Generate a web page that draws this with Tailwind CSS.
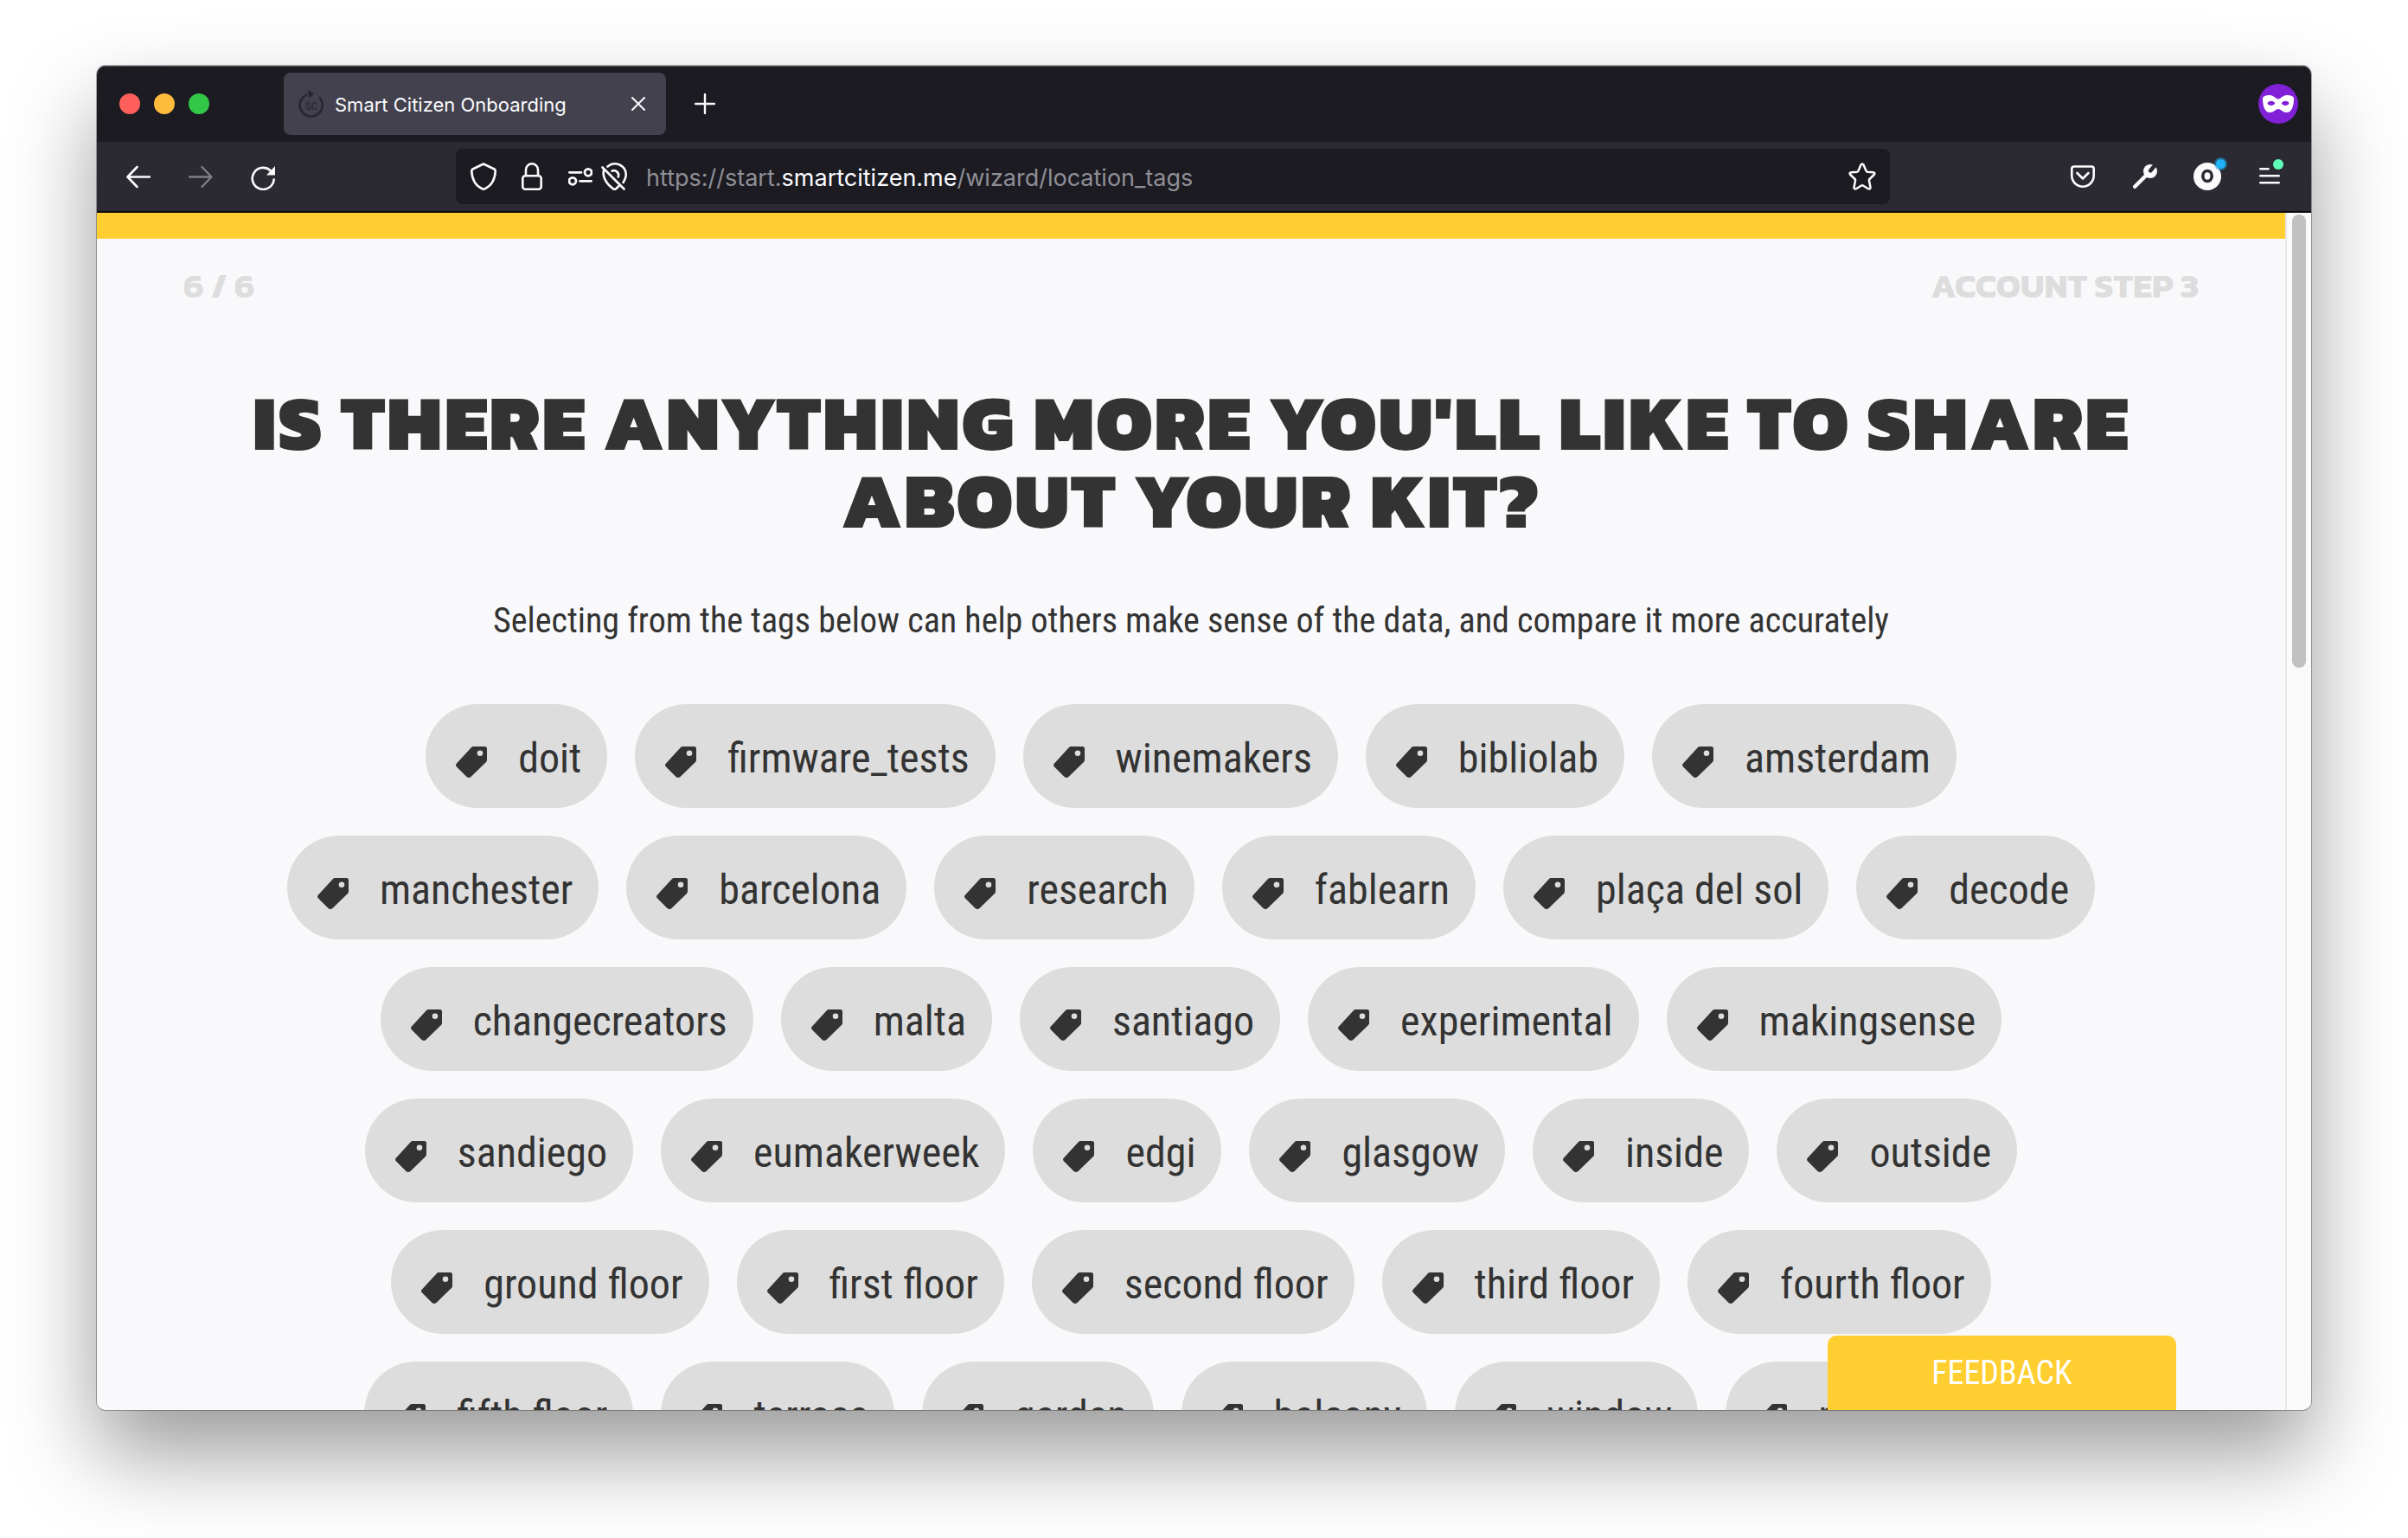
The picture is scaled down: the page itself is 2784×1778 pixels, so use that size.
<!DOCTYPE html>
<html lang="en">
<head>
<meta charset="utf-8">
<meta name="viewport" content="width=device-width, initial-scale=1">
<title>Smart Citizen Onboarding</title>
<script src="https://cdn.jsdelivr.net/npm/@tailwindcss/browser@4"></script>
</head>
<body class="bg-white">
<svg class="hidden" aria-hidden="true">
  <symbol id="tag" viewBox="0 0 36 36">
    <path fill="currentColor" fill-rule="evenodd" d="M20 0H33.500Q36 0 36 2.500V15.500Q36 17 35 18L17.500 35Q15 37 12.500 35L1 23.500Q-1 21.500 1 19.500L18 1Q19 0 20 0ZM28 4.500a3.300 3.300 0 1 0 0 6.600a3.300 3.300 0 0 0 0-6.600Z"/>
  </symbol>
</svg>

<div class="flex h-screen flex-col px-[112px] pt-[76px] pb-[148px]">
  <div class="flex min-h-0 flex-1 flex-col overflow-hidden rounded-[10px] bg-[#f9f9fb] shadow-[0_50px_100px_rgba(0,0,0,0.4),0_0_0_1px_rgba(0,0,0,0.3)]">

    <!-- Tab strip -->
    <header class="flex h-[88px] shrink-0 items-center border-t border-[#55545b] bg-[#1c1b22] pr-[15px] pb-px pl-[26px] font-['Inter',sans-serif] text-[#fbfbfe]">
      <div class="flex gap-4">
        <button aria-label="Close window" class="size-6 rounded-full bg-[#ff5f5b]"></button>
        <button aria-label="Minimize window" class="size-6 rounded-full bg-[#ffbc3c]"></button>
        <button aria-label="Zoom window" class="size-6 rounded-full bg-[#33c748]"></button>
      </div>
      <div class="ml-[86px] flex h-[72px] w-[442px] items-center rounded-lg bg-[#42414d] pr-6 pl-[17px]">
        <svg class="h-8 w-[30px] shrink-0" viewBox="0 0 30 32" fill="none" stroke="#26252b" stroke-width="2.400">
          <path d="M10 5.500A13 13 0 1 0 24 8.500L26 10"/>
          <path d="M10.500 0L18 4.500L12.500 9.500Z" fill="#26252b" stroke="none"/>
          <text x="15" y="22.500" text-anchor="middle" font-family="Roboto Condensed, sans-serif" font-size="13" fill="#26252b" stroke="none">SC</text>
        </svg>
        <span class="ml-3 flex-1 pt-[2px] text-[22px] leading-7">Smart Citizen Onboarding</span>
        <button aria-label="Close tab"><svg class="size-4" viewBox="0 0 16 16" stroke="currentColor" stroke-width="2" stroke-linecap="round"><path d="M1 1L15 15M15 1L1 15"/></svg></button>
      </div>
      <button aria-label="New tab" class="ml-[33px]"><svg class="size-6" viewBox="0 0 24 24" stroke="currentColor" stroke-width="2.400" stroke-linecap="round"><path d="M12 1V23M1 12H23"/></svg></button>
      <svg class="ml-auto size-[46px]" viewBox="0 0 46 46" role="img" aria-label="Private browsing">
        <circle cx="23" cy="23" r="23" fill="#8020d7"/>
        <path fill="#fff" fill-rule="evenodd" d="M5 17C5 14 9 13 13 13C18 13 20 17.500 23 17.500C26 17.500 28 13 33 13C37 13 41 14 41 17C41 25 39 33 32.500 33C28 33 26 29 23 29C20 29 18 33 13.500 33C7 33 5 25 5 17ZM10.400 22.300C11.500 18.800 18 18.800 19.200 22.300C18 25.800 11.500 25.800 10.400 22.300ZM26.800 22.300C28 18.800 34.500 18.800 35.600 22.300C34.500 25.800 28 25.800 26.800 22.300Z"/>
      </svg>
    </header>

    <!-- Navigation toolbar -->
    <nav class="flex h-[82px] shrink-0 items-center border-b-2 border-[#0c0c0d] bg-[#2b2a33] pr-9 pl-[34px] text-[#fbfbfe]">
      <div class="flex items-center gap-11">
        <button aria-label="Back"><svg class="size-7" viewBox="0 0 28 28" fill="none" stroke="currentColor" stroke-width="2.600" stroke-linecap="round" stroke-linejoin="round"><path d="M12.500 3L1.500 14.500L12.500 26M2 14.500H27"/></svg></button>
        <button aria-label="Forward" disabled class="text-[#7f7e85]"><svg class="size-7" viewBox="0 0 28 28" fill="none" stroke="currentColor" stroke-width="2.400" stroke-linecap="round" stroke-linejoin="round"><path d="M15.500 3L26.500 14.500L15.500 26M26 14.500H1"/></svg></button>
        <button aria-label="Reload" class="pt-1"><svg class="size-7" viewBox="0 0 28 28" fill="none" stroke="currentColor" stroke-width="2.600" stroke-linecap="round"><path d="M22.500 5A12.500 12.500 0 1 0 26.700 15.500"/><path d="M28 0V10.500H18Z" fill="currentColor" stroke="none"/></svg></button>
      </div>

      <div class="mx-[209px] flex h-16 flex-1 items-center rounded-lg bg-[#1c1b22] pr-4 pl-[17px]">
        <button aria-label="Tracking protection"><svg class="h-8 w-[30px]" viewBox="0 0 30 32" fill="none" stroke="currentColor" stroke-width="2.600" stroke-linejoin="round"><path d="M15 1.500L27.500 7.500Q28.800 8.200 28.700 10C28.300 19 24.500 26.500 16.500 30.300Q15 31 13.500 30.300C5.500 26.500 1.700 19 1.300 10Q1.200 8.200 2.500 7.500Z"/></svg></button>
        <button aria-label="Connection secure" class="ml-[29px]"><svg class="h-8 w-6" viewBox="0 0 24 32" fill="none" stroke="currentColor" stroke-width="2.600"><rect x="1.300" y="15.300" width="21.400" height="15.400" rx="3"/><path d="M5 15V8.300a7 7 0 0 1 14 0V15"/></svg></button>
        <button aria-label="Site permissions" class="ml-[30px]"><svg class="h-8 w-7" viewBox="0 0 28 32" fill="none" stroke="currentColor" stroke-width="2.800" stroke-linecap="round"><path d="M1.400 11.300H15M13.500 21.300H26.600"/><circle cx="23" cy="11.300" r="4"/><circle cx="5" cy="21.300" r="4"/></svg></button>
        <button aria-label="Location blocked" class="ml-[10px]"><svg class="h-8 w-[30px]" viewBox="0 0 30 32" fill="none" stroke="currentColor" stroke-width="2.600" stroke-linecap="round"><path d="M7.500 4.500C16 -2.500 28.700 3 28.700 14C28.700 17.500 27 20.500 25.500 23"/><path d="M3 9C1.500 15.500 5 21.500 8.500 25.500L13.500 30Q15.500 31.700 17.500 30L20.500 27"/><path d="M12.500 9.700C17 7.800 21.500 12 19.700 16.500"/><path d="M1.500 5.500L26.500 30.500"/></svg></button>
        <div role="textbox" aria-label="Address" contenteditable="true" class="ml-[22px] flex-1 pt-[3px] font-['Inter',sans-serif] text-[27px] leading-8 whitespace-nowrap text-[#8f8f96]">https://start.<span class="text-[#fbfbfe]">smartcitizen.me</span>/wizard/location_tags</div>
        <button aria-label="Bookmark this page"><svg class="size-8" viewBox="0 0 32 32" fill="none" stroke="currentColor" stroke-width="2.500" stroke-linejoin="round"><path d="M14.500 2.500Q16 0.500 17.500 2.500L20.500 9.500Q21 10.500 22 10.700L28.800 11.300Q31.500 11.800 29.700 14L24.500 19Q23.700 19.800 24 21L25.500 28.500Q25.500 31.200 23 30.200L16.900 26.500Q16 26 15.100 26.500L9 30.200Q6.500 31.200 6.500 28.500L8 21Q8.300 19.800 7.500 19L2.300 14Q0.500 11.800 3.200 11.300L10 10.700Q11 10.500 11.500 9.500Z"/></svg></button>
      </div>

      <div class="flex items-center">
        <button aria-label="Save to Pocket"><svg class="h-[26px] w-7" viewBox="0 0 28 26" fill="none" stroke="currentColor" stroke-width="2.600" stroke-linecap="round" stroke-linejoin="round"><path d="M4 1.500H24Q26.700 1.500 26.700 4.200V12A12.700 12.700 0 0 1 1.300 12V4.200Q1.300 1.500 4 1.500Z"/><path d="M7.500 9L14 15.500L20.500 9"/></svg></button>
        <button aria-label="Developer tools" class="ml-11"><svg class="size-7" viewBox="0 0 28 28" fill="none" stroke-linecap="round"><path d="M2.200 25.800L16 12" stroke="currentColor" stroke-width="4.400"/><circle cx="20" cy="8" r="8" fill="currentColor"/><path d="M27 -1L20.300 7.300" stroke="#2b2a33" stroke-width="4.600"/></svg></button>
        <button aria-label="Account" class="relative ml-[42px] size-8 rounded-full bg-[#fbfbfe]">
          <svg class="size-8" viewBox="0 0 32 32"><ellipse cx="16" cy="15.500" rx="5.200" ry="6" fill="none" stroke="#2b2a33" stroke-width="3.600"/></svg>
          <span class="absolute -top-1 -right-[5px] size-[11px] rounded-full bg-[#20b2f5] shadow-[0_0_0_2px_rgba(32,150,210,0.55)]"></span>
        </button>
        <button aria-label="Menu" class="relative ml-11"><svg class="size-6" viewBox="0 0 24 24" stroke="currentColor" stroke-width="2.600" stroke-linecap="round"><path d="M1.300 3.300H10.500M1.300 11.300H22.700M1.300 19.300H22.700"/></svg>
          <span class="absolute -top-2 -right-1 size-3 rounded-full bg-[#5dffb9]"></span>
        </button>
      </div>
    </nav>

    <!-- Web page -->
    <div class="flex min-h-0 flex-1">
      <main class="relative min-w-0 flex-1 overflow-hidden bg-[#f9f9fb] font-['Roboto_Condensed',Roboto,sans-serif] text-[#333]">
        <div class="h-[30px] bg-[#ffce30]"></div>
        <div class="flex justify-between px-[100px] pt-6 font-['Kanit',sans-serif] text-[40px] leading-[60px] font-bold text-[#ddd]">
          <span>6 / 6</span>
          <span>ACCOUNT STEP 3</span>
        </div>
        <h1 class="mt-[84px] px-[160px] text-center font-['Kanit',sans-serif] text-[90px] leading-none font-black tracking-[2px] uppercase">Is there anything more you'll like to share about your kit?</h1>
        <p class="mt-[70px] text-center text-[40px] leading-[48px]">Selecting from the tags below can help others make sense of the data, and compare it more accurately</p>
        <div id="tags" class="mt-[72px] flex flex-wrap justify-center gap-8 px-[200px]"></div>
        <button class="absolute right-[126px] bottom-0 h-[86px] w-[403px] rounded-t-[10px] bg-[#ffce30] text-[38px] text-white">FEEDBACK</button>
      </main>
      <div class="w-[30px] shrink-0 border-l-2 border-[#e8e8e8] bg-[#fafafa] pt-[2px] pl-[6px]">
        <div class="h-[524px] w-4 rounded-full bg-[#c1c1c1]"></div>
      </div>
    </div>
  </div>
</div>

<script>
  const tags = ['doit', 'firmware_tests', 'winemakers', 'bibliolab', 'amsterdam',
    'manchester', 'barcelona', 'research', 'fablearn', 'plaça del sol', 'decode',
    'changecreators', 'malta', 'santiago', 'experimental', 'makingsense',
    'sandiego', 'eumakerweek', 'edgi', 'glasgow', 'inside', 'outside',
    'ground floor', 'first floor', 'second floor', 'third floor', 'fourth floor',
    'fifth floor', 'terrace', 'garden', 'balcony', 'window', 'pedestrian'];
  document.getElementById('tags').innerHTML = tags.map(name => `
    <button class="flex items-center gap-9 rounded-full bg-[#ddd] pt-[39px] pr-[30px] pb-[33px] pl-[35px] text-[48px] leading-[48px] whitespace-nowrap">
      <svg class="mt-2 size-9" aria-hidden="true"><use href="#tag"/></svg>${name}
    </button>`).join('');
</script>
</body>
</html>
